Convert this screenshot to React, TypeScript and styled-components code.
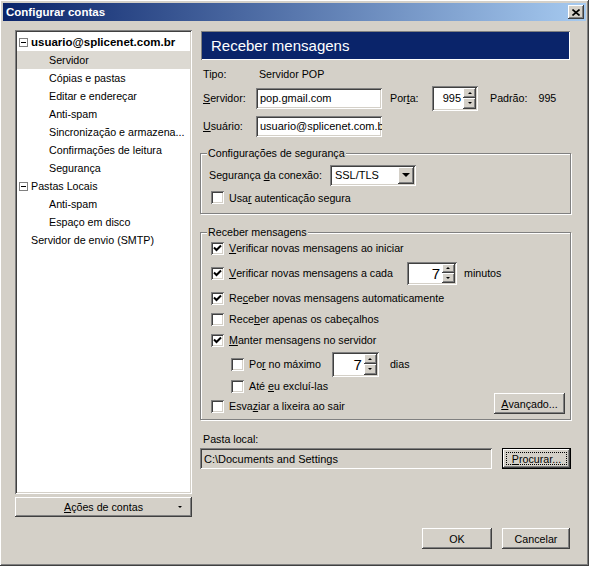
import React from "react";
import styled, { createGlobalStyle, css } from "styled-components";

const FACE = "#D4D0C8";
const FONT_SIZE = "10.7px";

const Global = createGlobalStyle`
  html, body { margin: 0; padding: 0; background: ${FACE}; }
  body { font-family: "Liberation Sans", Arial, sans-serif; font-size: ${FONT_SIZE}; color: #000; }
  * { box-sizing: border-box; }
`;

const raised = css`
  box-shadow: inset -1px -1px #404040, inset 1px 1px #ffffff, inset -2px -2px #808080, inset 2px 2px ${FACE};
`;
const sunken = css`
  box-shadow: inset 1px 1px #808080, inset -1px -1px #ffffff, inset 2px 2px #404040, inset -2px -2px ${FACE};
`;

const Window = styled.div`
  width: 589px;
  height: 566px;
  padding: 3px;
  background: ${FACE};
  ${raised};
  display: flex;
  flex-direction: column;
`;

const TitleBar = styled.div`
  height: 18px;
  flex: none;
  background: linear-gradient(to right, #0a246a, #a6caf0);
  display: flex;
  align-items: center;
  justify-content: space-between;
  padding: 0 2px 0 3px;
`;

const TitleText = styled.span`
  color: #fff;
  font-weight: bold;
  font-size: 11.5px;
`;

const CloseButton = styled.div`
  width: 16px;
  height: 14px;
  background: ${FACE};
  ${raised};
  display: flex;
  align-items: center;
  justify-content: center;
`;

const Body = styled.div`
  flex: 1;
  display: grid;
  grid-template-columns: 177px 371px;
  column-gap: 8px;
  padding: 9px 15px 14px 12px;
  min-height: 0;
`;

const LeftColumn = styled.div`
  display: flex;
  flex-direction: column;
  gap: 3px;
  align-self: start;
`;

const Tree = styled.div`
  height: 464px;
  background: #fff;
  ${sunken};
  padding: 3px 2px 2px 2px;
  display: flex;
  flex-direction: column;
`;

const TreeRow = styled.div<{ $level: number; $selected?: boolean; $bold?: boolean }>`
  height: 18px;
  display: flex;
  align-items: center;
  padding-left: ${(p) => (p.$level === 0 ? 2 : p.$level === 1 ? 14 : 32)}px;
  background: ${(p) => (p.$selected ? "#dcd9d2" : "transparent")};
  font-weight: ${(p) => (p.$bold ? "bold" : "normal")};
  font-size: ${(p) => (p.$bold ? "11.5px" : FONT_SIZE)};
  white-space: nowrap;
  gap: 3px;
`;

const Expander = styled.span`
  width: 9px;
  height: 9px;
  border: 1px solid #808080;
  background: #fff;
  position: relative;
  flex: none;
  &::after {
    content: "";
    position: absolute;
    left: 1px;
    top: 3px;
    width: 5px;
    height: 1px;
    background: #000;
  }
`;

const Button = styled.button<{ $w?: number; $focused?: boolean }>`
  font: inherit;
  font-size: ${FONT_SIZE};
  color: #000;
  background: ${FACE};
  border: none;
  height: 21px;
  width: ${(p) => (p.$w ? `${p.$w}px` : "auto")};
  padding: 0 6px;
  display: flex;
  align-items: center;
  justify-content: center;
  position: relative;
  flex: none;
  ${(p) =>
    p.$focused
      ? css`
          box-shadow: inset 0 0 0 1px #000, inset -2px -2px #404040, inset 2px 2px #ffffff, inset -3px -3px #808080;
          &::after {
            content: "";
            position: absolute;
            inset: 4px;
            border: 1px dotted #000;
          }
        `
      : raised};
`;

const ActionsButton = styled(Button)`
  width: 177px;
  height: 20px;
  span.arrow {
    position: absolute;
    right: 10px;
    top: 9px;
    width: 0;
    height: 0;
    border-left: 2px solid transparent;
    border-right: 2px solid transparent;
    border-top: 2px solid #000;
  }
`;

const RightColumn = styled.div`
  display: flex;
  flex-direction: column;
`;

const Header = styled.div`
  height: 31px;
  background: #0a246a;
  color: #fff;
  font-size: 15px;
  display: flex;
  align-items: center;
  padding-left: 10px;
  box-shadow: inset 1px 1px #808080, inset -1px -1px #ffffff;
  border: 1px solid ${FACE};
`;

const FormGrid = styled.div`
  display: grid;
  grid-template-columns: 53px 126px 50px 46px auto;
  grid-template-rows: 18px 26px 26px;
  row-gap: 2px;
  margin-top: 4px;
  align-items: center;
  padding-left: 3px;
`;

const Cell = styled.div<{ $span?: number }>`
  display: flex;
  align-items: center;
  white-space: nowrap;
  grid-column: span ${(p) => p.$span ?? 1};
`;

const TextField = styled.div<{ $w: number; $disabled?: boolean }>`
  width: ${(p) => p.$w}px;
  height: 21px;
  background: ${(p) => (p.$disabled ? FACE : "#fff")};
  ${sunken};
  display: flex;
  align-items: center;
  padding: 0 3px 0 4px;
  overflow: hidden;
  white-space: nowrap;
  font-size: 11px;
`;

const SpinBox = styled.div<{ $w: number; $h: number }>`
  width: ${(p) => p.$w}px;
  height: ${(p) => p.$h}px;
  background: #fff;
  ${sunken};
  display: flex;
  align-items: stretch;
  padding: 2px;
  flex: none;
`;

const SpinValue = styled.div<{ $big?: boolean }>`
  flex: 1;
  display: flex;
  align-items: center;
  justify-content: flex-end;
  padding-right: 2px;
  font-size: ${(p) => (p.$big ? "15px" : "11px")};
`;

const SpinButtons = styled.div`
  width: 13px;
  display: flex;
  flex-direction: column;
`;

const SpinArrow = styled.div<{ $up?: boolean }>`
  flex: 1;
  background: ${FACE};
  ${raised};
  display: flex;
  align-items: center;
  justify-content: center;
  &::after {
    content: "";
    width: 0;
    height: 0;
    border-left: 2px solid transparent;
    border-right: 2px solid transparent;
    ${(p) => (p.$up ? "border-bottom: 2px solid #000;" : "border-top: 2px solid #000;")}
  }
`;

const Group = styled.fieldset<{ $mt: number; $pb: number }>`
  margin: ${(p) => p.$mt}px 0 0 0;
  padding: 0 5px ${(p) => p.$pb}px 10px;
  border: 1px solid #808080;
  box-shadow: inset 1px 1px #ffffff, 1px 1px #ffffff;
  min-width: 0;
`;

const Legend = styled.legend`
  padding: 0 1px;
  margin-left: -4px;
  background: ${FACE};
  font-size: ${FONT_SIZE};
  line-height: 14px;
`;

const Row = styled.div<{ $h: number; $indent?: boolean; $shift?: number; $mt?: number }>`
  height: ${(p) => p.$h}px;
  margin-top: ${(p) => p.$mt ?? 0}px;
  display: flex;
  align-items: center;
  padding-left: ${(p) => (p.$indent ? 20 : 0)}px;
  margin-left: ${(p) => p.$shift ?? 0}px;
  white-space: nowrap;
`;

const CheckBox = styled.span`
  width: 13px;
  height: 13px;
  flex: none;
  background: #fff;
  ${sunken};
  margin-right: 5px;
  display: flex;
  align-items: center;
  justify-content: center;
`;

const Select = styled.div`
  width: 86px;
  height: 21px;
  background: #fff;
  ${sunken};
  display: flex;
  align-items: center;
  padding: 2px;
  margin-left: 8px;
`;

const SelectText = styled.span`
  flex: 1;
  padding-left: 3px;
  font-size: 11px;
`;

const SelectButton = styled.span`
  width: 16px;
  height: 17px;
  background: ${FACE};
  ${raised};
  display: flex;
  align-items: center;
  justify-content: center;
  &::after {
    content: "";
    border-left: 4px solid transparent;
    border-right: 4px solid transparent;
    border-top: 4px solid #000;
  }
`;

const Gap = styled.span<{ $w: number }>`
  display: inline-block;
  width: ${(p) => p.$w}px;
  flex: none;
`;

const Spacer = styled.span`
  flex: 1;
`;

const FolderLabel = styled.div`
  margin-top: 12px;
  padding-left: 3px;
  height: 14px;
  line-height: 14px;
`;

const FolderRow = styled.div`
  margin-top: 2px;
  display: flex;
  align-items: center;
  gap: 10px;
`;

const DialogButtons = styled.div`
  margin-top: auto;
  display: flex;
  justify-content: flex-end;
  gap: 10px;
  padding-right: 1px;
`;

const U = styled.span`
  text-decoration: underline;
`;

const Check = () => (
  <svg width="9" height="9" viewBox="0 0 9 9">
    <path d="M1 3.5 L3.5 6 L8 1.5" stroke="#000" strokeWidth="2" fill="none" />
  </svg>
);

const Box: React.FC<{ checked?: boolean }> = ({ checked }) => <CheckBox>{checked ? <Check /> : null}</CheckBox>;

const Spinner: React.FC<{ value: string; w: number; h: number; big?: boolean }> = ({ value, w, h, big }) => (
  <SpinBox $w={w} $h={h}>
    <SpinValue $big={big}>{value}</SpinValue>
    <SpinButtons>
      <SpinArrow $up />
      <SpinArrow />
    </SpinButtons>
  </SpinBox>
);

export default function App() {
  return (
    <>
      <Global />
      <Window>
        <TitleBar>
          <TitleText>Configurar contas</TitleText>
          <CloseButton>
            <svg width="8" height="7" viewBox="0 0 8 7">
              <path d="M0.5 0.5 L7.5 6.5 M7.5 0.5 L0.5 6.5" stroke="#000" strokeWidth="1.6" />
            </svg>
          </CloseButton>
        </TitleBar>
        <Body>
          <LeftColumn>
            <Tree>
              <TreeRow $level={0} $bold>
                <Expander />
                usuario@splicenet.com.br
              </TreeRow>
              <TreeRow $level={2} $selected>Servidor</TreeRow>
              <TreeRow $level={2}>Cópias e pastas</TreeRow>
              <TreeRow $level={2}>Editar e endereçar</TreeRow>
              <TreeRow $level={2}>Anti-spam</TreeRow>
              <TreeRow $level={2}>Sincronização e armazena...</TreeRow>
              <TreeRow $level={2}>Confirmações de leitura</TreeRow>
              <TreeRow $level={2}>Segurança</TreeRow>
              <TreeRow $level={0}>
                <Expander />
                Pastas Locais
              </TreeRow>
              <TreeRow $level={2}>Anti-spam</TreeRow>
              <TreeRow $level={2}>Espaço em disco</TreeRow>
              <TreeRow $level={1}>Servidor de envio (SMTP)</TreeRow>
            </Tree>
            <ActionsButton>
              <span>
                <U>A</U>ções de contas
              </span>
              <span className="arrow" />
            </ActionsButton>
          </LeftColumn>

          <RightColumn>
            <Header>Receber mensagens</Header>
            <FormGrid>
              <Cell>Tipo:</Cell>
              <Cell $span={4}>&nbsp;Servidor POP</Cell>
              <Cell>
                <U>S</U>ervidor:
              </Cell>
              <Cell>
                <TextField $w={126}>pop.gmail.com</TextField>
              </Cell>
              <Cell>
                <Gap $w={8} />
                Por<U>t</U>a:
              </Cell>
              <Cell>
                <Spinner value="995" w={46} h={25} />
              </Cell>
              <Cell>
                <Gap $w={12} />
                Padrão:
                <Gap $w={11} />
                995
              </Cell>
              <Cell>
                <U>U</U>suário:
              </Cell>
              <Cell $span={4}>
                <TextField $w={126}>usuario@splicenet.com.br</TextField>
              </Cell>
            </FormGrid>

            <Group $mt={7} $pb={4}>
              <Legend>Configurações de segurança</Legend>
              <Row $h={22} $mt={4} $shift={-2}>
                Segurança&nbsp;<U>d</U>a conexão:
                <Select>
                  <SelectText>SSL/TLS</SelectText>
                  <SelectButton />
                </Select>
              </Row>
              <Row $h={23}>
                <Box />
                Usa<U>r</U>&nbsp;autenticação segura
              </Row>
            </Group>

            <Group $mt={11} $pb={0}>
              <Legend>Receber mensagens</Legend>
              <Row $h={18}>
                <Box checked />
                <U>V</U>erificar novas mensagens ao iniciar
              </Row>
              <Row $h={32}>
                <Box checked />
                <U>V</U>erificar novas mensagens a cada
                <Gap $w={14} />
                <Spinner value="7" w={50} h={23} big />
                <Gap $w={7} />
                minutos
              </Row>
              <Row $h={18}>
                <Box checked />
                Re<U>c</U>eber novas mensagens automaticamente
              </Row>
              <Row $h={24}>
                <Box />
                Rece<U>b</U>er apenas os cabeçalhos
              </Row>
              <Row $h={18}>
                <Box checked />
                <U>M</U>anter mensagens no servidor
              </Row>
              <Row $h={30} $indent>
                <Box />
                Po<U>r</U>&nbsp;no máximo
                <Gap $w={11} />
                <Spinner value="7" w={47} h={25} big />
                <Gap $w={11} />
                dias
              </Row>
              <Row $h={14} $indent>
                <Box />
                Até&nbsp;<U>e</U>u excluí-las
              </Row>
              <Row $h={26}>
                <Box />
                Esva<U>z</U>iar a lixeira ao sair
                <Spacer />
                <Button $w={71} style={{ alignSelf: "flex-start" }}>
                  <U>A</U>vançado...
                </Button>
              </Row>
            </Group>

            <FolderLabel>Pasta local:</FolderLabel>
            <FolderRow>
              <TextField $w={292} $disabled>
                C:\Documents and Settings
              </TextField>
              <Button $w={69} $focused>
                <U>P</U>rocurar...
              </Button>
            </FolderRow>

            <DialogButtons>
              <Button $w={70}>OK</Button>
              <Button $w={68}>Cancelar</Button>
            </DialogButtons>
          </RightColumn>
        </Body>
      </Window>
    </>
  );
}
